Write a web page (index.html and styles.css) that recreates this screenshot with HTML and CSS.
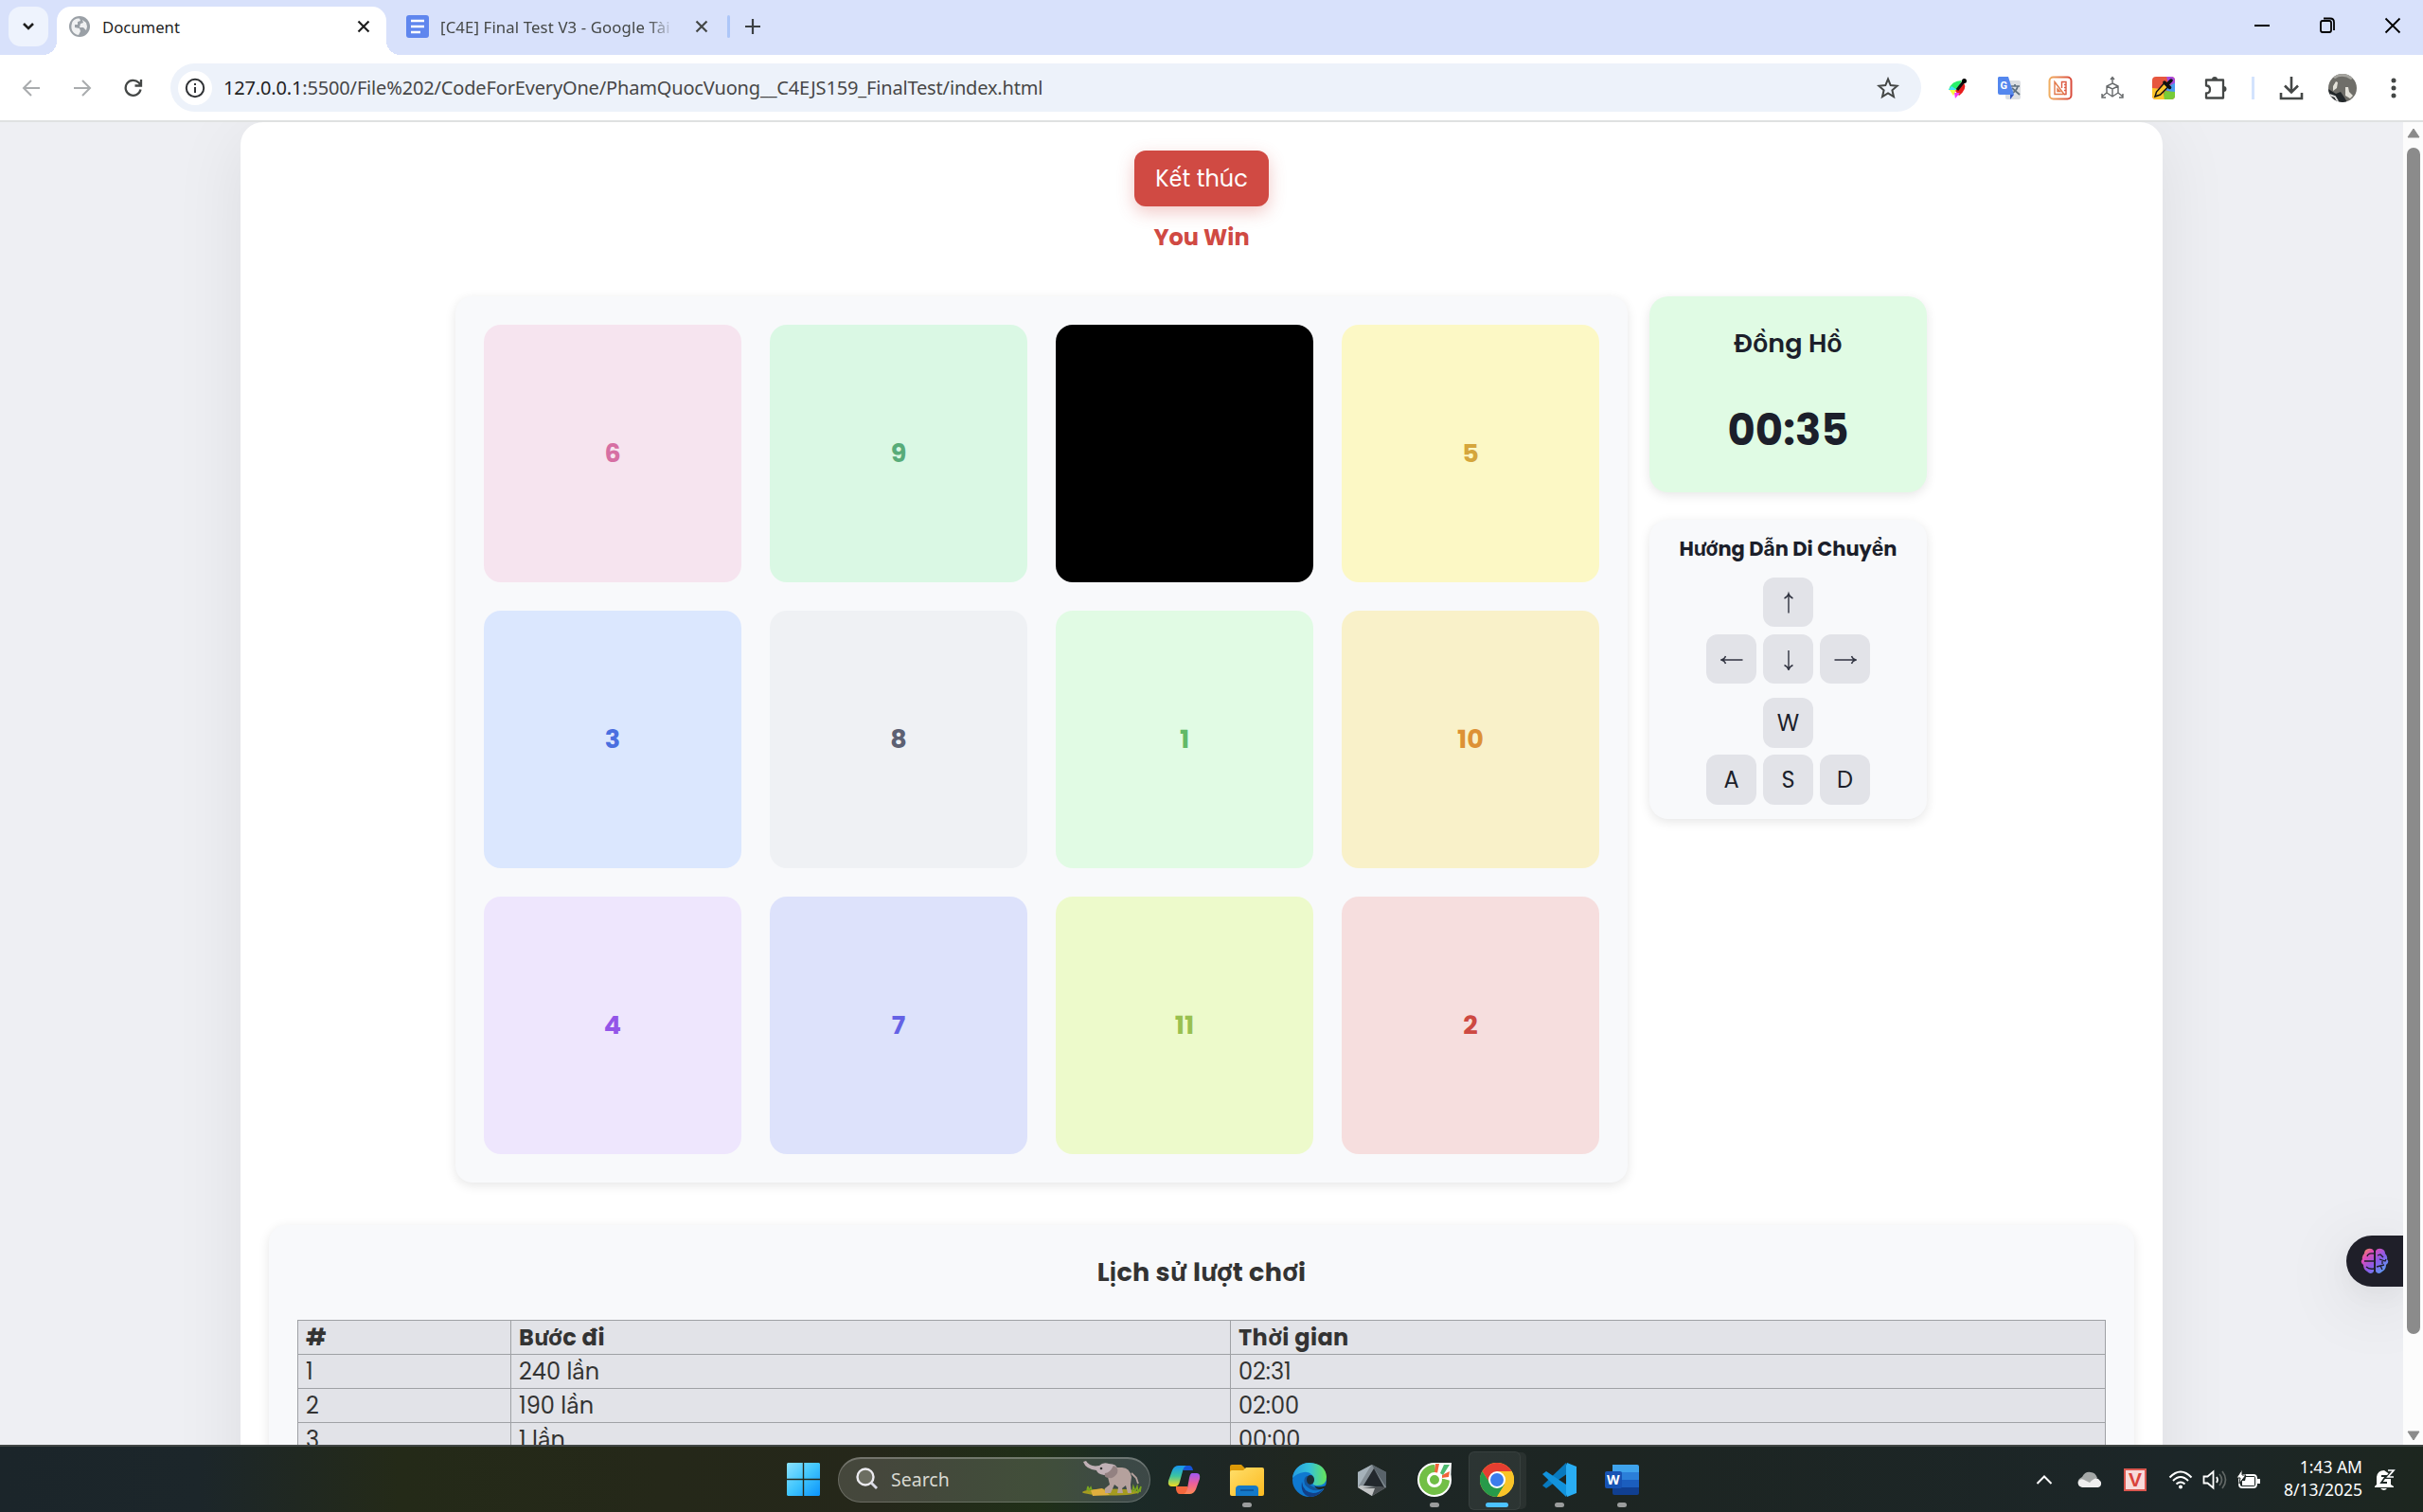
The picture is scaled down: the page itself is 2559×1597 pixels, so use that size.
FILE: index.html
```html
<!DOCTYPE html>
<html lang="vi">
<head>
<meta charset="utf-8">
<title>Document</title>
<link rel="stylesheet" href="styles.css">
</head>
<body>
<div class="screen">
  <header class="tabstrip">
    <button class="tab-search"><svg width="14" height="10" viewBox="0 0 14 10"><path d="M2 2l5 5 5-5" fill="none" stroke="#1f1f1f" stroke-width="2.6"/></svg></button>
    <div class="tab active">
      <svg class="fav" width="22" height="22" viewBox="0 0 22 22"><circle cx="11" cy="11" r="11" fill="#9aa0a6"/><path d="M3 7.500C4 3.500 8 2 11 2.500L12 5l-3 1 0 3-3 0 0 3 5 1 1 3-2 4C4 19 1 14 3 7.500zM14 4l4 3 1 4-1 4-3-3-4 0 1-4 3-1z" fill="#fff" opacity=".85"/></svg>
      <span class="tab-title t-doc">Document</span>
      <svg class="x" width="14" height="14" viewBox="0 0 14 14"><path d="M1.500 1.500l11 11M12.500 1.500l-11 11" stroke="#1f1f1f" stroke-width="2.200"/></svg>
    </div>
    <div class="tab second">
      <svg class="fav" width="24" height="24" viewBox="0 0 24 24"><rect width="24" height="24" rx="3" fill="#5f86ee"/><path d="M5 6h14M5 12h14M5 18h10" stroke="#fff" stroke-width="2.600"/></svg>
      <span class="tab-title t-test">[C4E] Final Test V3 - Google Tài</span>
      <svg class="x" width="14" height="14" viewBox="0 0 14 14"><path d="M1.500 1.500l11 11M12.500 1.500l-11 11" stroke="#444746" stroke-width="2.200"/></svg>
    </div>
    <i class="tab-sep"></i>
    <svg class="plus" width="18" height="18" viewBox="0 0 18 18"><path d="M9 1v16M1 9h16" stroke="#3c4043" stroke-width="2.200"/></svg>
    <div class="win">
      <svg width="18" height="18" viewBox="0 0 18 18"><path d="M1 9h16" stroke="#000" stroke-width="2"/></svg>
      <svg width="18" height="18" viewBox="0 0 18 18"><path d="M2 6q0-2 2-2h7q2 0 2 2v8q0 2-2 2H4q-2 0-2-2zM5 1.500h7q4 0 4 4V14" fill="none" stroke="#000" stroke-width="1.800"/></svg>
      <svg width="18" height="18" viewBox="0 0 18 18"><path d="M1.500 1.500l15 15M16.500 1.500l-15 15" stroke="#000" stroke-width="1.800"/></svg>
    </div>
  </header>
  <nav class="toolbar">
    <div class="nav-icons">
      <svg width="20" height="20" viewBox="0 0 20 20"><path d="M19 10H2M10 2l-8 8 8 8" fill="none" stroke="#a9acae" stroke-width="2"/></svg>
      <svg width="20" height="20" viewBox="0 0 20 20"><path d="M1 10h17M10 2l8 8-8 8" fill="none" stroke="#a9acae" stroke-width="2"/></svg>
      <svg width="20" height="20" viewBox="0 0 20 20"><path d="M17.500 11.500A8 8 0 1 1 15.500 4.300L18 7M18 1v6.500h-6.500" fill="none" stroke="#444746" stroke-width="2.300"/></svg>
    </div>
    <div class="omnibox">
      <span class="info"><svg width="22" height="22" viewBox="0 0 22 22"><circle cx="11" cy="11" r="9.200" fill="none" stroke="#303235" stroke-width="2"/><path d="M11 10v6M11 6v2" stroke="#303235" stroke-width="2"/></svg></span>
      <span class="url"><b>127.0.0.1</b>:5500/File%202/CodeForEveryOne/PhamQuocVuong__C4EJS159_FinalTest/index.html</span>
      <svg class="star" width="24" height="24" viewBox="0 0 24 24"><path d="M12 2.500l2.700 6.600 7 .6-5.300 4.600 1.600 6.900-6-3.700-6 3.700 1.600-6.900L2.300 9.700l7-.6z" fill="none" stroke="#444746" stroke-width="2"/></svg>
    </div>
    <div class="ext">
      <svg width="24" height="24" viewBox="0 0 24 24"><path d="M2 14Q5 4 16 4L11 14z" fill="#29f06a"/><path d="M2 14l3-4 6 4z" fill="#42dfff"/><path d="M3 14h7l-3 6z" fill="#f4ff3e"/><path d="M9 15l9-9q4 7-5 14z" fill="#e91d1d"/><path d="M8 17l6 0-5 6z" fill="#f43df4"/><path d="M11 14L18 5" stroke="#111" stroke-width="3"/><circle cx="18.500" cy="4.500" r="2.500"/></svg>
      <svg width="26" height="26" viewBox="0 0 26 26"><rect x="9" y="5" width="16" height="20" rx="2" fill="#dcdfe3"/><path d="M15 11h9M19 9v2M22 11q-1 5-7 8M16 13l8 7" fill="none" stroke="#5f7180" stroke-width="1.700"/><path d="M2 1h10l6 19H3q-2 0-2-2V2z" fill="#5487ee"/><path d="M14 20h4l-4 5z" fill="#3457c5"/><text x="3.500" y="14" class="glyph-g">G</text></svg>
      <svg width="26" height="26" viewBox="0 0 26 26"><defs><linearGradient id="rg"><stop stop-color="#f0ae62"/><stop offset="1" stop-color="#d94b3c"/></linearGradient></defs><rect x="1.500" y="1.500" width="23" height="23" rx="4" fill="#fff" stroke="url(#rg)" stroke-width="2"/><path d="M7 6.500L17 19.500H7zM10 14v2.500h2.500z" fill="none" stroke="#e2794a" stroke-width="1.400"/><path d="M14.500 13V6.500h4.500v13h-2M17 9.500h2M17 12.500h2M17 15.500h2" fill="none" stroke="#dc5a42" stroke-width="1.400"/></svg>
      <svg width="26" height="26" viewBox="0 0 26 26"><path d="M13 8l6 3v7l-6 4-6-4v-7zM7 11l6 3 6-3M13 14v8M13 8V2M7 18l-5 4M19 18l5 4M11 4l2-2.500L15 4M2 19v4h4M24 19v4h-4" fill="none" stroke="#66696b" stroke-width="1.400"/></svg>
      <svg width="26" height="26" viewBox="0 0 26 26"><clipPath id="rr"><rect x="1" y="1" width="24" height="24" rx="4"/></clipPath><g clip-path="url(#rr)"><path d="M0 0h26v26H0z" fill="#e7573f"/><path d="M16 0h10v8l-8 2z" fill="#a84ade"/><path d="M26 7v12L12 14z" fill="#4a9bf0"/><path d="M26 17v9H12l2-10z" fill="#77cc37"/><path d="M0 13l12 1 2 12H0z" fill="#fbc52c"/></g><path d="M4 22l1.500-5 8-9 4 4-8 8z" fill="#fbc52c" stroke="#111" stroke-width="1.500"/><path d="M14 7l5.500 5.500M17 9l4-4" stroke="#111" stroke-width="3.500" stroke-linecap="round"/></svg>
      <svg width="26" height="26" viewBox="0 0 26 26"><path d="M3 4.500h18v19H3v-5q4 0 4-4t-4-4z" fill="none" stroke="#444746" stroke-width="2.300" stroke-linejoin="round"/><path d="M9 4a3 3 0 0 1 6 0zM21.500 11a3 3 0 0 1 0 6z" fill="#444746"/></svg>
    </div>
    <i class="bar-sep"></i>
    <svg class="dl" width="26" height="26" viewBox="0 0 26 26"><path d="M13 1v16M6 10.500l7 7 7-7M2 18v6h22v-6" fill="none" stroke="#444746" stroke-width="2.600"/></svg>
    <svg class="avatar" width="30" height="30" viewBox="0 0 30 30"><clipPath id="av"><circle cx="15" cy="15" r="15"/></clipPath><g clip-path="url(#av)"><path d="M0 0h30v30H0z" fill="#6f6e69"/><path d="M0 16l8 5 5-2 4 6 3 5H0z" fill="#23282b"/><path d="M5 13l3-5 2 1-1 6-4 3zM18 14l3 0 1 5 4 4-3 3-5-3z" fill="#e3e1d9"/><path d="M6 4Q15-2 25 5" stroke="#a5a49f" stroke-width="3" fill="none"/><path d="M1 22l6 2 3 5" stroke="#ddd" stroke-width="2" fill="none"/></g></svg>
    <svg class="dots" width="6" height="22" viewBox="0 0 6 22"><g fill="#444746"><circle cx="3" cy="3" r="2.500"/><circle cx="3" cy="11" r="2.500"/><circle cx="3" cy="19" r="2.500"/></g></svg>
  </nav>

  <div class="viewport">
    <div class="page">
      <main class="container">
        <button class="end-btn">Kết thúc</button>
        <p class="result">You Win</p>
        <div class="game">
          <section class="board">
            <div class="cell c6">6</div><div class="cell c9">9</div><div class="cell blank"></div><div class="cell c5">5</div>
            <div class="cell c3">3</div><div class="cell c8">8</div><div class="cell c1">1</div><div class="cell c10">10</div>
            <div class="cell c4">4</div><div class="cell c7">7</div><div class="cell c11">11</div><div class="cell c2">2</div>
          </section>
          <aside class="side">
            <section class="clock"><h2>Đồng Hồ</h2><div class="time">00:35</div></section>
            <section class="guide">
              <h3>Hướng Dẫn Di Chuyển</h3>
              <div class="keys">
                <kbd class="up"><svg width="24" height="24" viewBox="0 0 24 24"><path d="M12 3.500v20M7.500 8Q11 6.500 12 3 13 6.500 16.500 8" /></svg></kbd>
                <kbd><svg width="24" height="24" viewBox="0 0 24 24"><path d="M1.500 13h22M5.500 9Q4.500 12 1 13 4.500 14 5.500 17"/></svg></kbd>
                <kbd><svg width="24" height="24" viewBox="0 0 24 24"><path d="M12 3v20M7.500 18.500Q11 20 12 23.500 13 20 16.500 18.500"/></svg></kbd>
                <kbd><svg width="24" height="24" viewBox="0 0 24 24"><path d="M.5 13h22M18.500 9Q19.500 12 23 13 19.500 14 18.500 17"/></svg></kbd>
              </div>
              <div class="keys letters"><kbd class="up">W</kbd><kbd>A</kbd><kbd>S</kbd><kbd>D</kbd></div>
            </section>
          </aside>
        </div>
        <section class="history">
          <h2>Lịch sử lượt chơi</h2>
          <table>
            <colgroup><col class="k1"><col class="k2"><col class="k3"></colgroup>
            <tr><th>#</th><th>Bước đi</th><th>Thời gian</th></tr>
            <tr><td>1</td><td>240 lần</td><td>02:31</td></tr>
            <tr><td>2</td><td>190 lần</td><td>02:00</td></tr>
            <tr><td>3</td><td>1 lần</td><td>00:00</td></tr>
          </table>
        </section>
      </main>
      <div class="assistant">
        <svg width="30" height="28" viewBox="0 0 30 28"><defs><linearGradient id="br" x1="0" y1="0" x2="1" y2="1"><stop stop-color="#f0a63c"/><stop offset=".25" stop-color="#e04bb4"/><stop offset=".55" stop-color="#8a5be8"/><stop offset="1" stop-color="#4fb0f4"/></linearGradient></defs><path d="M14 3Q12 0 8 1 4 2 4 6 1 9 2 12-1 15 3 18 3 23 7 25 11 29 14 25zM16 3Q18 0 22 1 26 2 26 6 29 9 28 12 31 15 27 18 27 23 23 25 19 29 16 25z" fill="url(#br)"/><path d="M14 6q-6-1-7 3M4 14h10M14 22q-5 1-8-2M18 8l3-1 3 3M20 12l6 2 1-2M23 14v3M17 20l4-1 4-1M21 19l2 4" fill="none" stroke="#1f1f29" stroke-width="1.300"/></svg>
      </div>
    </div>
    <div class="scrollbar">
      <svg width="14" height="11" viewBox="0 0 14 11"><path d="M7 1l6 9H1z" fill="#8b8b8b" stroke="#8b8b8b" stroke-linejoin="round"/></svg>
      <i class="thumb"></i>
      <svg class="down" width="14" height="11" viewBox="0 0 14 11"><path d="M7 10l6-9H1z" fill="#8b8b8b" stroke="#8b8b8b" stroke-linejoin="round"/></svg>
    </div>
  </div>

  <footer class="taskbar">
    <svg class="start" width="35" height="35" viewBox="0 0 35 35"><defs><linearGradient id="wn" x1="0" y1="0" x2="1" y2="1" ><stop stop-color="#8ce2ff"/><stop offset=".5" stop-color="#3fc5fd"/><stop offset="1" stop-color="#0b93fb"/></linearGradient></defs><path d="M1 0h15.800v16.800H0V1zM18.200 0H34l1 1v15.800H18.200zM0 18.200h16.800V35H1l-1-1zM18.200 18.200H35V34l-1 1H18.200z" fill="url(#wn)"/></svg>
    <div class="search">
      <svg width="24" height="24" viewBox="0 0 24 24"><circle cx="11" cy="10" r="8.500" fill="#6c6e62" stroke="#ecebf0" stroke-width="2.400"/><path d="M17 16l6 6" stroke="#d9dae4" stroke-width="2.800"/></svg>
      <span>Search</span>
      <svg class="elephant" width="66" height="38" viewBox="0 0 66 38"><ellipse cx="31" cy="33" rx="30" ry="3.500" fill="#a59b20"/><path d="M10 31l12-2 8 7-18 1z" fill="#e0ae3e"/><path d="M6 31l1-4 1 4 2-3 1 3M54 33l1-6 2 5 2-5 1 6 3-6-1 6" stroke="#79a51f" fill="none" stroke-width="1.500"/><path d="M28 17l2 8-5 4v5h6l4-9 4 3-1 6h6l-1-5 4-3 2 8h4l-1-9 1-8q-2-10-10-10l-10 0z" fill="#b5a19d"/><path d="M2 1l3-1q4 7 14 5 4-4 10-2 9 0 9 6l-4 6-10 0q-7-1-8-5Q5 9 2 1z" fill="#c0b0b5"/><path d="M34 5q6 2 4 8-4 6-8 5-7 0-5-5 5 0 9-8z" fill="#938181"/><path d="M53 13l5 5 2 6" fill="none" stroke="#b5a19d" stroke-width="1.800"/><circle cx="21" cy="8" r="1.300" fill="#333"/></svg>
    </div>
    <div class="apps">
      <div class="app"><svg width="36" height="36" viewBox="0 0 36 36"><defs><linearGradient id="cp1" x1="0" y1="0" x2="0" y2="1"><stop stop-color="#1796f0"/><stop offset=".5" stop-color="#3cc4a0"/><stop offset="1" stop-color="#f4dc20"/></linearGradient><linearGradient id="cp2" x1="0" y1="0" x2="0" y2="1"><stop stop-color="#a058f5"/><stop offset=".5" stop-color="#ec5f9a"/><stop offset="1" stop-color="#ff8a52"/></linearGradient></defs><path d="M11 3h12q3 0 4 5H17z" fill="#1654d8"/><path d="M12 3h8q-3 1-4 6l-3 11q-1 5-5 5H5q-5 0-4-6l4-11q2-5 7-5z" fill="url(#cp1)"/><path d="M9 25h12l3 8H13q-3 0-4-5z" fill="#f4673d"/><path d="M26 11h5q4 0 3 6l-4 11q-2 5-7 5h-6q3-1 4-6l2-11q1-5 3-5z" fill="url(#cp2)"/></svg></div>
      <div class="app run"><svg width="36" height="36" viewBox="0 0 36 36"><defs><linearGradient id="fo" x1="0" y1="0" x2="1" y2="1"><stop stop-color="#ffdf6b"/><stop offset="1" stop-color="#fcba20"/></linearGradient></defs><path d="M0 4q0-2 2-2h10l4 4v10H0z" fill="#dc9907"/><path d="M0 10q0-2 2-2h12l3-3h17q2 0 2 2v26q0 2-2 2H2q-2 0-2-2z" fill="url(#fo)"/><path d="M6 35v-7q0-4 4-4h16q4 0 4 4v7z" fill="#1479c8"/><path d="M11 29h14" stroke="#0b4f92" stroke-width="1.500"/></svg></div>
      <div class="app"><svg width="36" height="36" viewBox="0 0 36 36"><defs><linearGradient id="eg"><stop stop-color="#249de2"/><stop offset=".5" stop-color="#35c1d9"/><stop offset="1" stop-color="#66e557"/></linearGradient></defs><circle cx="18" cy="18" r="18" fill="#0f79d0"/><path d="M0 16C1 7 8 0 18 0q17 1 18 15 0 9-10 9-6 0-4-4 2-3-1-7-4-4-9-3Q5 11 0 16z" fill="url(#eg)"/><path d="M10 20q1 11 12 12 6 0 11-5-5 9-15 9-10-3-8-16z" fill="#123f86"/><path d="M18 14q-2 4 0 8 4 7 17 3l1 3q-3-1-3-1-7 4-14 1-9-5-6-12 2-3 5-2z" fill="#13549b"/><path d="M23 24q3 3 13 0v6l-3-3q-7 3-10-3z" fill="#1c2625"/><ellipse cx="19" cy="18" rx="4" ry="5" fill="#1c2c35"/></svg></div>
      <div class="app"><svg width="36" height="36" viewBox="0 0 36 36"><path d="M18 2l15 8v16l-15 9L3 26V10z" fill="#858f96"/><path d="M18 2l15 8v16L20 6z" fill="#59636a"/><path d="M18 2L3 10v16L15 6z" fill="#a6b2ba"/><path d="M20 6l11 20-10-1-12-1z" fill="#23282d"/><path d="M6 24l16 2-4 9-15-9z" fill="#c2c4c5"/><path d="M8 27l13 0-3 8 15-9-10-1z" fill="#4c5053"/></svg></div>
      <div class="app run"><svg width="36" height="36" viewBox="0 0 36 36"><circle cx="18" cy="18" r="17" fill="#72bf46" stroke="#fff" stroke-width="2"/><path d="M18 0h18l-1 19-15-4z" fill="#fff"/><path d="M19 1h4l-2 10h-3zM26 13l8-4-1 6-7 1z" fill="#f2643b"/><path d="M24 11l4-9h6l-7 11z" fill="#4dbb70"/><circle cx="18" cy="18" r="6.500" fill="#6fbe45" stroke="#fff" stroke-width="3"/></svg></div>
      <div class="app on"><svg width="36" height="36" viewBox="0 0 36 36"><circle cx="18" cy="18" r="18" fill="#f9c428"/><path d="M2.400 9A18 18 0 0 1 33.600 9L18 10 11 22z" fill="#e63e31"/><path d="M2.400 9A18 18 0 0 0 18 36l8-13-15-1z" fill="#279a4a"/><path d="M18 9h15.600A18 18 0 0 1 18 36l8-13z" fill="#f9c428"/><circle cx="18" cy="18" r="9" fill="#fff"/><circle cx="18" cy="18" r="7" fill="#3b7cec"/></svg></div>
      <div class="app run"><svg width="36" height="36" viewBox="0 0 36 36"><path d="M25 0L0 24l4 3L27 11z" fill="#0879be"/><path d="M4 9L0 12l25 24 3-11z" fill="#1292dc"/><path d="M26 0l10 4v28l-10 4-1-3V3z" fill="#29adf4"/></svg></div>
      <div class="app run"><svg width="36" height="36" viewBox="0 0 36 36"><path d="M8 2h26q2 0 2 2v7H8z" fill="#3fa3ec"/><path d="M8 10h28v8H8z" fill="#2b7fd9"/><path d="M8 18h28v8H8z" fill="#1b5ebe"/><path d="M8 26h28v6q0 2-2 2H10q-2 0-2-2z" fill="#103f91"/><rect y="9" width="18" height="18" rx="2" fill="#1753b4"/><text x="2" y="23" class="glyph-w">W</text></svg></div>
    </div>
    <div class="tray">
      <svg class="up-i" width="18" height="12" viewBox="0 0 18 12"><path d="M1.500 10L9 2.500l7.500 7.500" fill="none" stroke="#fff" stroke-width="2"/></svg>
      <svg class="cloud" width="26" height="18" viewBox="0 0 26 18"><path d="M1 14q-2-5 4-8Q8 0 14 1q5 0 7 6l-8 7z" fill="#a4a8a7"/><path d="M5 17q-5-1-4-6 2-5 8-1l4 2q5-6 9-4 5 4 2 8l-2 1z" fill="#eee"/></svg>
      <div class="vkey">V</div>
      <svg class="wifi" width="26" height="20" viewBox="0 0 26 20"><g fill="none" stroke="#fff" stroke-width="2"><path d="M1.500 7.500q11.500-12 23 0M5 11q8-8 16 0M8.500 14.500q4.500-4 9 0"/></g><circle cx="13" cy="17.500" r="2" fill="#fff"/></svg>
      <svg class="vol" width="26" height="22" viewBox="0 0 26 22"><path d="M1.500 7.500h4l6-5v17l-6-5h-4z" fill="none" stroke="#fff" stroke-width="1.800"/><path d="M15 8q2 3 0 6" stroke="#fff" stroke-width="1.700" fill="none"/><path d="M18 5q5 6 0 12M21 2q7 9 0 18" stroke="#626866" stroke-width="1.700" fill="none"/></svg>
      <svg class="bat" width="26" height="22" viewBox="0 0 26 22"><rect x="3" y="6" width="18" height="13" rx="3" fill="none" stroke="#fff" stroke-width="1.800"/><path d="M10 8h9v9H6v-5h3zM22 10h3v5h-3z" fill="#fff"/><path d="M6 0L0 9h4l-1 6 7-9H6z" fill="#fff" stroke="#1f2725"/></svg>
      <div class="when"><span>1:43 AM</span><span>8/13/2025</span></div>
      <svg class="bell" width="24" height="26" viewBox="0 0 24 26"><path d="M3 18V10q1-7 8-7l7 5v10l3 2v1H1v-1zM7 22h7q-3 4-7 0z" fill="#fff"/><path d="M8 9h5l-5 7h6" fill="none" stroke="#1d2725" stroke-width="1.800"/><path d="M15 3h6l-6 7h6" fill="none" stroke="#1d2725" stroke-width="4"/><path d="M15 3h6l-6 7h6" fill="none" stroke="#fff" stroke-width="1.700"/></svg>
    </div>
  </footer>
</div>
</body>
</html>
```
FILE: styles.css
```css
* { box-sizing: border-box; }
body { margin: 0; font-family: "Poppins", "Inter", sans-serif; }
svg { display: block; flex: none; }
h2, h3, p { margin: 0; }
button { border: 0; padding: 0; font-family: inherit; }

.screen { width: 2559px; height: 1597px; display: flex; flex-direction: column; overflow: hidden; }

/* Tab strip */
.tabstrip { height: 58px; flex: none; background: #d8e1fb; display: flex; padding-left: 9px; font-family: "Noto Sans", sans-serif; font-size: 16.7px; }
.tab-search { width: 42px; height: 42px; margin-top: 7px; border-radius: 13px; background: #eef3fd; display: grid; place-items: center; }
.tab { display: flex; align-items: center; height: 42px; margin-top: 7px; flex: none; }
.tab.active { position: relative; width: 348px; height: 51px; margin-left: 9px; padding: 0 17px 9px 13px; background: #fff; border-radius: 15px 15px 0 0; }
.tab.active::before, .tab.active::after { content: ""; position: absolute; bottom: 0; width: 15px; height: 15px; }
.tab.active::before { left: -15px; background: radial-gradient(circle at 0 0, transparent 15px, #fff 15px); }
.tab.active::after { right: -15px; background: radial-gradient(circle at 100% 0, transparent 15px, #fff 15px); }
.tab-title { white-space: nowrap; line-height: 28px; }
.t-doc { margin: 2px 0 0 13px; color: #1f1f1f; }
.tab.active .x { margin-left: auto; }
.tab.second { width: 341px; padding-left: 21px; }
.t-test { flex: none; width: 247px; margin: 2px 22px 0 12px; color: #444746; letter-spacing: .15px; -webkit-mask: linear-gradient(90deg, #000 89%, transparent); mask: linear-gradient(90deg, #000 89%, transparent); }
.tab-sep { width: 3px; height: 24px; margin: 16px 0 0 19px; background: #adc6f8; border-radius: 2px; }
.plus { margin: 19px 0 0 15px; }
.win { margin-left: auto; padding: 18px 23px 0 0; display: flex; gap: 51px; }

/* Toolbar */
.toolbar { height: 71px; flex: none; background: #fff; border-bottom: 2px solid #dfe1e1; display: flex; align-items: center; }
.nav-icons { display: flex; gap: 34px; padding-left: 23px; width: 180px; }
.omnibox { width: 1849px; height: 51px; border-radius: 26px; background: #edf2fa; display: flex; align-items: center; padding: 0 23px 0 8px; }
.info { width: 36px; height: 36px; border-radius: 50%; background: #fff; display: grid; place-items: center; }
.url { margin-left: 12px; font: 20px "Noto Sans", sans-serif; letter-spacing: -.16px; color: #474747; white-space: nowrap; }
.url b { font-weight: 400; color: #1f1f1f; }
.star { margin-left: auto; }
.ext { display: flex; gap: 28.500px; margin-left: 27px; align-items: center; }
.bar-sep { width: 3px; height: 24px; background: #d3e3fd; margin-left: 25px; }
.dl { margin-left: 26px; }
.avatar { margin-left: 26px; }
.dots { margin-left: 36px; }
.glyph-g { font: bold 11px "Roboto", sans-serif; fill: #fff; }

/* Page */
.viewport { height: 1397px; flex: none; display: flex; overflow: hidden; }
.page { position: relative; width: 2538px; height: 1397px; overflow: hidden; background: #eeeff3; padding-left: 254px; }
.container { width: 2030px; background: #fff; border-radius: 24px; padding: 30px; box-shadow: 0 15px 75px rgba(0,0,0,.08); display: flex; flex-direction: column; align-items: center; }
.end-btn { width: 142px; height: 59px; border-radius: 12px; background: #d04a43; color: #fff; font-size: 24px; box-shadow: 0 6px 18px rgba(208,74,67,.3); }
.result { margin-top: 15px; height: 36px; line-height: 36px; font-size: 24px; font-weight: 700; color: #d04a43; }
.game { width: 100%; margin-top: 44px; padding-left: 197px; display: flex; align-items: flex-start; gap: 23px; }
.board { display: grid; grid-template-columns: repeat(4, 272px); grid-auto-rows: 272px; gap: 30px; padding: 30px; border-radius: 18px; background: #f8f9fb; box-shadow: 0 3px 12px rgba(0,0,0,.1); }
.cell { border-radius: 18px; display: grid; place-items: center; font-size: 27px; font-weight: 700; }
.c6 { background: #f6e4ef; color: #d66fa3; }
.c9 { background: #daf8e4; color: #58ac79; }
.blank { background: #000; }
.c5 { background: #fcf8c5; color: #d5a63c; }
.c3 { background: #dbe7fe; color: #4a6fe0; }
.c8 { background: #eff1f4; color: #5c6072; }
.c1 { background: #e1fbe4; color: #62b968; }
.c10 { background: #f9f1c9; color: #dd9135; }
.c4 { background: #eee6fd; color: #9355e8; }
.c7 { background: #dde2fb; color: #6562e5; }
.c11 { background: #edfacb; color: #99c050; }
.c2 { background: #f6dede; color: #cd4942; }
.side { width: 293px; display: flex; flex-direction: column; gap: 29px; text-align: center; color: #1c1f2b; }
.clock { height: 207px; padding-top: 29px; border-radius: 20px; background: #e0fbe4; box-shadow: 0 3px 12px rgba(0,0,0,.1); }
.clock h2 { font-size: 27px; line-height: 41px; font-weight: 600; }
.time { font-size: 45px; line-height: 72px; margin-top: 36px; font-weight: 700; }
.guide { height: 316px; padding-top: 15px; border-radius: 20px; background: #f8f9fb; box-shadow: 0 3px 12px rgba(0,0,0,.1); }
.guide h3 { font-size: 21px; line-height: 32px; font-weight: 700; white-space: nowrap; }
.keys { display: grid; grid-template-columns: repeat(3, 53px); grid-auto-rows: 52px; gap: 8px 7px; justify-content: center; margin-top: 14px; }
.letters { margin-top: 15px; grid-auto-rows: 53px; row-gap: 7px; }
.keys kbd { display: grid; place-items: center; border-radius: 12px; background: #e2e3e8; font: 24px "Poppins", "Inter", sans-serif; color: #1c1f2b; }
.keys .up { grid-column: 2; }
.keys .up + kbd { grid-column: 1; }
.keys path { fill: none; stroke: #303340; stroke-width: 1.400; }
.history { align-self: stretch; margin-top: 45px; height: 420px; padding: 29px 30px; border-radius: 18px; background: #f8f9fb; box-shadow: 0 3px 12px rgba(0,0,0,.1); color: #333; }
.history h2 { text-align: center; font-size: 27px; line-height: 42px; font-weight: 700; letter-spacing: .3px; margin-bottom: 29px; }
table { width: 1910px; table-layout: fixed; border-collapse: collapse; background: #e2e3e8; font-size: 24px; line-height: 35px; }
th, td { border: 1px solid #9fa1a5; padding: 0 7px 0 8px; height: 36px; text-align: left; }
td { font-weight: 400; }
th { font-weight: 700; letter-spacing: .4px; }
.k1 { width: 225px; }
.k2 { width: 760px; }
.assistant { position: absolute; right: 0; top: 1176px; width: 60px; height: 54px; border-radius: 27px 0 0 27px; background: #1f1f29; display: grid; place-items: center; box-shadow: 0 15px 75px rgba(0,0,0,.12), 0 8px 24px rgba(0,0,0,.04); }
.scrollbar { width: 21px; background: #fcfcfc; display: flex; flex-direction: column; align-items: center; padding-top: 6px; }
.thumb { width: 14px; height: 1253px; border-radius: 7px; background: #8b8b8b; margin-top: 10px; }
.down { margin-top: 102px; }

/* Taskbar */
.taskbar { height: 71px; flex: none; border-top: 2px solid #414644; display: flex; align-items: center; background: linear-gradient(90deg, #1b252a 0, #1c262a 210px, #242a18 420px, #252819 700px, #25271a 930px, #203018 1100px, #1b2a27 1190px, #1e2624 1300px, #202720 1370px, #1d2625 1500px, #1d2522 1700px, #1c2628 2300px, #1d261f 2559px); font-family: "Noto Sans", sans-serif; }
.start { margin-left: 831px; }
.search { width: 330px; height: 48px; margin-left: 19px; border-radius: 24px; border: 1px solid rgba(255,255,255,.2); border-top: 2px solid rgba(255,255,255,.25); background: rgba(255,255,255,.15); display: flex; align-items: center; padding: 0 6px 2px 17px; color: #d8d9d2; font-size: 19.5px; }
.search span { margin-left: 14px; }
.elephant { margin-left: auto; }
.apps { display: flex; margin-left: 3px; }
.app { position: relative; width: 66px; height: 60px; display: grid; place-items: center; }
.app.run::after, .app.on::after { content: ""; position: absolute; bottom: 1px; left: 28px; width: 10px; height: 5px; border-radius: 3px; background: #9b9d9d; }
.app.on::before { content: ""; position: absolute; left: 3px; top: 0; width: 53px; height: 60px; border-radius: 6px; background: rgba(255,255,255,.07); border: 1px solid rgba(255,255,255,.06); box-shadow: 7px 0 0 -1px rgba(255,255,255,.06); }
.app.on svg { position: relative; }
.app.on::after { left: 21px; width: 24px; background: #4cc2ff; }
.glyph-w { font: bold 14px "Open Sans", sans-serif; fill: #fff; }
.tray { margin-left: auto; padding-right: 28px; display: flex; align-items: center; color: #fff; }
.cloud { margin-left: 26px; }
.vkey { width: 24px; height: 24px; margin-left: 23px; background: #f8dada; border: 2px solid #d9574f; display: grid; place-items: center; color: #d9423b; font: bold 21px/20px "Liberation Sans", sans-serif; }
.wifi { margin-left: 23px; }
.vol { margin-left: 10px; }
.bat { margin-left: 10px; }
.when { width: 98px; margin: 0 12px 3px 9px; display: flex; flex-direction: column; text-align: right; font-size: 17.5px; line-height: 24px; white-space: nowrap; }
```
